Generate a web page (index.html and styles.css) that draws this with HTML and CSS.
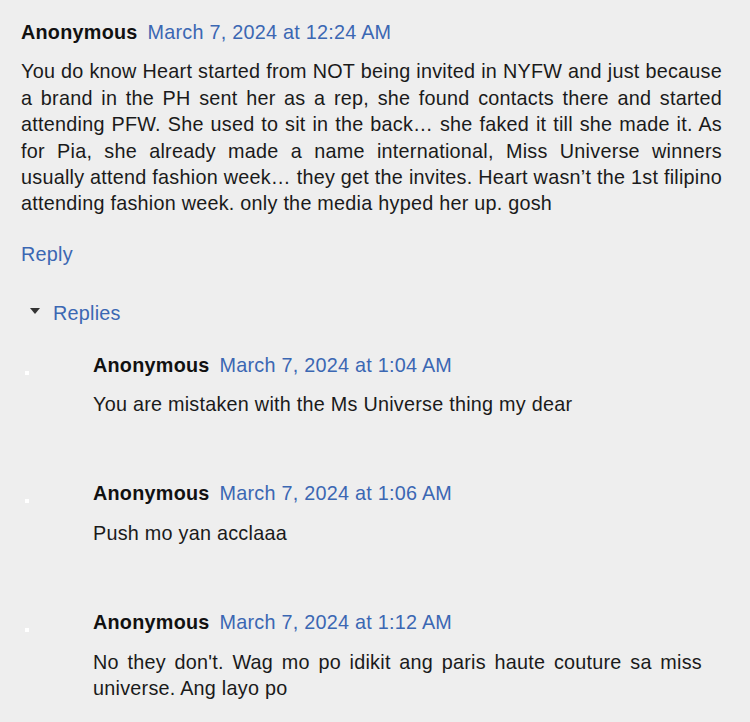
FILE: index.html
```html
<!DOCTYPE html>
<html lang="en">
<head>
    <meta charset="UTF-8">
    <meta name="viewport" content="width=device-width, initial-scale=1.0">
    <title>Comments</title>
    <link rel="stylesheet" href="styles.css">
</head>
<body>
    <div class="comments">
        <!-- Top level comment -->
        <div class="comment">
            <div class="comment-header">
                <cite class="user">Anonymous</cite>
                <a class="datetime" href="#">March 7, 2024 at 12:24 AM</a>
            </div>
            <p class="comment-content">You do know Heart started from NOT being invited in NYFW and just because a brand in the PH sent her as a rep, she found contacts there and started attending PFW. She used to sit in the back… she faked it till she made it. As for Pia, she already made a name international, Miss Universe winners usually attend fashion week… they get the invites. Heart wasn’t the 1st filipino attending fashion week. only the media hyped her up. gosh</p>
            <div class="comment-actions"><a href="#">Reply</a></div>
        </div>

        <!-- Replies -->
        <div class="thread-toggle">
            <span class="thread-arrow"></span>
            <a href="#">Replies</a>
        </div>
        <ol class="thread">
            <li class="reply">
                <div class="avatar"><span class="avatar-dot"></span></div>
                <div class="reply-body">
                    <div class="comment-header">
                        <cite class="user">Anonymous</cite>
                        <a class="datetime" href="#">March 7, 2024 at 1:04 AM</a>
                    </div>
                    <p class="comment-content">You are mistaken with the Ms Universe thing my dear</p>
                </div>
            </li>
            <li class="reply">
                <div class="avatar"><span class="avatar-dot"></span></div>
                <div class="reply-body">
                    <div class="comment-header">
                        <cite class="user">Anonymous</cite>
                        <a class="datetime" href="#">March 7, 2024 at 1:06 AM</a>
                    </div>
                    <p class="comment-content">Push mo yan acclaaa</p>
                </div>
            </li>
            <li class="reply">
                <div class="avatar"><span class="avatar-dot"></span></div>
                <div class="reply-body">
                    <div class="comment-header">
                        <cite class="user">Anonymous</cite>
                        <a class="datetime" href="#">March 7, 2024 at 1:12 AM</a>
                    </div>
                    <p class="comment-content">No they don't. Wag mo po idikit ang paris haute couture sa miss universe. Ang layo po</p>
                </div>
            </li>
        </ol>
    </div>
</body>
</html>
```

FILE: styles.css
```css
body {
    margin: 0;
    padding: 0;
    background-color: #eeeeee;
    font-family: "Liberation Sans", Arial, sans-serif;
    font-size: 19.8px;
    letter-spacing: 0.25px;
    line-height: 26.4px;
    color: #1a1a1a;
}
a {
    color: #3b67b3;
    text-decoration: none;
}
.comments {
    padding: 19px 28px 20px 21px;
}
.comment-header {
    display: flex;
    gap: 10px;
}
.user {
    font-style: normal;
    font-weight: bold;
    color: #111;
}
.comment-content {
    margin: 13px 0 0;
    text-align: justify;
}
.comment-actions {
    margin-top: 24px;
}
.thread-toggle {
    display: flex;
    align-items: center;
    margin-top: 33px;
    padding-left: 9px;
}
.thread-arrow {
    width: 0;
    height: 0;
    border-left: 5px solid transparent;
    border-right: 5px solid transparent;
    border-top: 6px solid #333;
    margin-right: 13px;
    margin-top: -4px;
}
.thread {
    list-style: none;
    margin: 25px 20px 0 0;
    padding: 0;
}
.reply {
    display: flex;
    margin-bottom: 63px;
}
.reply:last-child {
    margin-bottom: 0;
}
.avatar {
    width: 72px;
    flex-shrink: 0;
}
.avatar-dot {
    display: block;
    width: 4px;
    height: 4px;
    background: #fff;
    margin: 19px 0 0 4px;
}
.reply-body {
    flex: 1;
}
```
